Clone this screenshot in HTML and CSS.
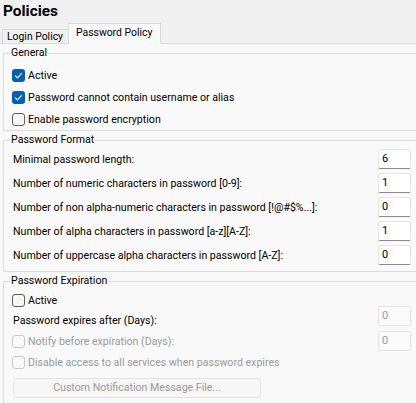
FILE: index.html
```html
<!DOCTYPE html>
<html>
<head>
<meta charset="utf-8">
<link rel="stylesheet" href="styles.css">
</head>
<body>
<div class="window">
  <div class="title">Policies</div>
  <div class="tabs">
    <div class="tab">Login Policy</div>
    <div class="tab active">Password Policy</div>
  </div>
  <div class="panel">
    <fieldset class="group general">
      <legend>General</legend>
      <label class="check-row">
        <svg class="cb" width="13" height="13" viewBox="0 0 13 13"><rect x="0" y="0" width="13" height="13" rx="3" fill="#005fb8"/><path d="M3.4 6.8 L5.5 8.9 L9.6 4.3" fill="none" stroke="#fff" stroke-width="1.1" stroke-linecap="round" stroke-linejoin="round"/></svg>
        <span>Active</span>
      </label>
      <label class="check-row">
        <svg class="cb" width="13" height="13" viewBox="0 0 13 13"><rect x="0" y="0" width="13" height="13" rx="3" fill="#005fb8"/><path d="M3.4 6.8 L5.5 8.9 L9.6 4.3" fill="none" stroke="#fff" stroke-width="1.1" stroke-linecap="round" stroke-linejoin="round"/></svg>
        <span>Password cannot contain username or alias</span>
      </label>
      <label class="check-row">
        <svg class="cb" width="13" height="13" viewBox="0 0 13 13"><rect x="0.5" y="0.5" width="12" height="12" rx="2.5" fill="#f6f6f6" stroke="#5f5f5f"/></svg>
        <span>Enable password encryption</span>
      </label>
    </fieldset>

    <fieldset class="group format">
      <legend>Password Format</legend>
      <div class="field-row"><span>Minimal password length:</span><span class="input">6</span></div>
      <div class="field-row"><span>Number of numeric characters in password [0-9]:</span><span class="input">1</span></div>
      <div class="field-row"><span>Number of non alpha-numeric characters in password [!@#$%...]:</span><span class="input">0</span></div>
      <div class="field-row"><span>Number of alpha characters in password [a-z][A-Z]:</span><span class="input">1</span></div>
      <div class="field-row"><span>Number of uppercase alpha characters in password [A-Z]:</span><span class="input">0</span></div>
    </fieldset>

    <fieldset class="group expiration">
      <legend>Password Expiration</legend>
      <label class="check-row exp-active">
        <svg class="cb" width="13" height="13" viewBox="0 0 13 13"><rect x="0.5" y="0.5" width="12" height="12" rx="2.5" fill="#f6f6f6" stroke="#5f5f5f"/></svg>
        <span>Active</span>
      </label>
      <div class="field-row exp-after"><span class="low">Password expires after (Days):</span><span class="input disabled">0</span></div>
      <div class="field-row exp-notify">
        <span class="check-inline disabled-text">
          <svg class="cb" width="13" height="13" viewBox="0 0 13 13"><rect x="0.5" y="0.5" width="12" height="12" rx="2.5" fill="none" stroke="#c8c8c8"/></svg>
          <span>Notify before expiration (Days):</span>
        </span>
        <span class="input disabled">0</span>
      </div>
      <label class="check-row exp-disable disabled-text">
        <svg class="cb" width="13" height="13" viewBox="0 0 13 13"><rect x="0.5" y="0.5" width="12" height="12" rx="2.5" fill="none" stroke="#c8c8c8"/></svg>
        <span>Disable access to all services when password expires</span>
      </label>
      <div class="button-row">
        <span class="button">Custom Notification Message File...</span>
      </div>
    </fieldset>
  </div>
</div>
</body>
</html>
```
FILE: styles.css
```css
html, body {
  margin: 0;
  padding: 0;
}
body {
  width: 416px;
  height: 403px;
  overflow: hidden;
  background: #f0f0f0;
  font-family: Roboto, "Liberation Sans", sans-serif;
  font-size: 10.6px;
  color: #000;
}
.window {
  display: flex;
  flex-direction: column;
  height: 403px;
}
.title {
  font-weight: bold;
  font-size: 15.4px;
  height: 22px;
  line-height: 22px;
  padding-left: 3px;
}
.tabs {
  display: flex;
  align-items: flex-end;
  height: 21px;
  padding-left: 2px;
  position: relative;
  z-index: 1;
}
.tab {
  box-sizing: border-box;
  height: 14px;
  width: 66px;
  border: 1px solid #d9d9d9;
  border-right: none;
  border-bottom: none;
  background: #f0f0f0;
  padding-left: 4px;
  line-height: 13px;
  font-size: 10.4px;
}
.tab.active {
  height: 21px;
  width: 93px;
  margin-bottom: -1px;
  border-right: 1px solid #d9d9d9;
  background: #f9f9f9;
  padding-left: 7px;
  line-height: 18px;
}
.panel {
  flex: 1;
  background: #f9f9f9;
  border-top: 1px solid #d9d9d9;
  overflow: hidden;
}
.group {
  box-sizing: border-box;
  width: 413px;
  margin: 2px 0 0 3px;
  padding: 0;
  border: 1px solid #dcdcdc;
  border-right: none;
  min-width: 0;
}
.group legend {
  margin-left: 6px;
  padding: 0 1px;
  line-height: 14px;
  height: 14px;
}
.general {
  padding-top: 4px;
}
.format {
  padding-bottom: 4px;
}
.check-row {
  display: flex;
  align-items: center;
  height: 22px;
  padding-left: 8px;
  gap: 3px;
}
.cb {
  flex: none;
  display: block;
}
.field-row {
  display: grid;
  grid-template-columns: 365px 33px;
  align-items: center;
  height: 24px;
  padding-left: 9px;
}
.input {
  box-sizing: border-box;
  height: 20px;
  background: #fff;
  border: 1px solid #e4e4e4;
  border-bottom: 1px solid #8a8a8a;
  border-radius: 2px;
  padding-left: 3px;
  line-height: 18px;
  font-size: 11px;
}
.input.disabled {
  background: #fbfbfb;
  border-bottom-color: #e4e4e4;
  color: #9a9a9a;
}
.exp-active {
  height: 18px;
  align-items: flex-start;
  padding-top: 6px;
  box-sizing: border-box;
}
.exp-after {
  height: 20px;
}
.exp-after .low {
  align-self: end;
  line-height: 14px;
  margin-bottom: -2px;
}
.exp-notify {
  height: 20px;
  margin-top: 5px;
  padding-left: 8px;
  grid-template-columns: 366px 33px;
}
.check-inline {
  display: flex;
  align-items: center;
  gap: 3px;
}
.disabled-text {
  color: #9a9a9a;
}
.exp-disable {
  height: 20px;
  margin-top: 1px;
}
.button-row {
  padding: 6px 0 10px 9px;
}
.button {
  box-sizing: border-box;
  display: block;
  width: 248px;
  height: 20px;
  line-height: 18px;
  text-align: center;
  background: #f6f6f6;
  border: 1px solid #e2e2e2;
  border-radius: 4px;
  color: #9a9a9a;
}
```
